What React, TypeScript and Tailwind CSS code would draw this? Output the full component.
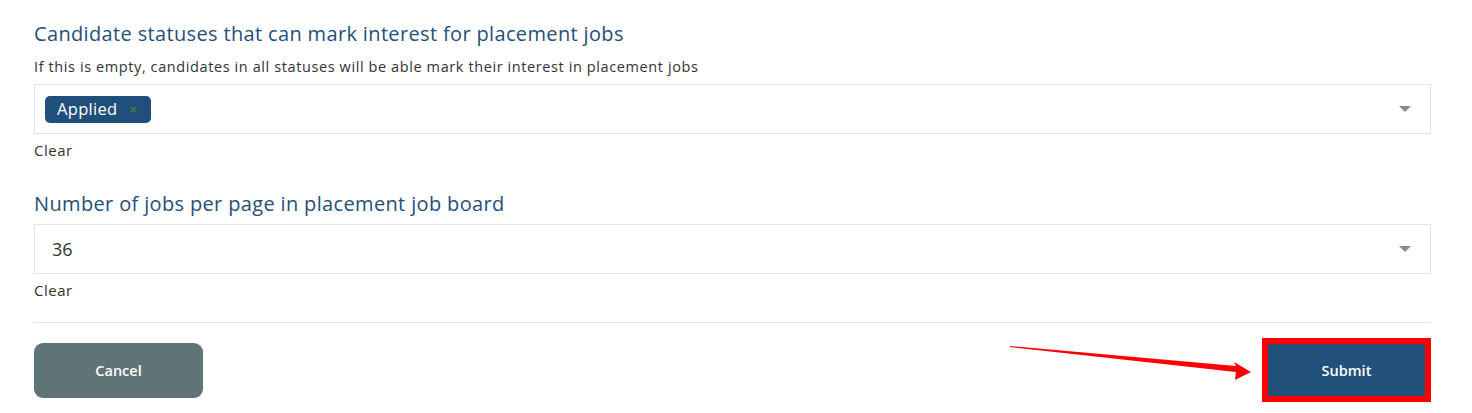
import React from "react";

function Caret() {
  return (
    <svg width="12" height="6" viewBox="0 0 12 6" className="shrink-0">
      <path d="M0 0 L12 0 L6 6 Z" fill="#8a8a8a" />
    </svg>
  );
}

export default function App() {
  return (
    <div
      className="w-[1472px] h-[413px] bg-white relative overflow-hidden"
      style={{ fontFamily: '"Open Sans", "Noto Sans", sans-serif' }}
    >
      <div className="ml-[34px] w-[1397px] pt-[22px]">
        <h2 className="text-[20px] leading-[24px] tracking-[0.35px] text-[#1f4f7a] font-medium">
          Candidate statuses that can mark interest for placement jobs
        </h2>
        <p className="mt-[11px] text-[14.5px] leading-[20px] tracking-[0.6px] text-[#333]">
          If this is empty, candidates in all statuses will be able mark their interest in placement jobs
        </p>
        <div className="mt-[7px] h-[50px] border border-[#e3e3e3] flex items-center pl-[10px] pr-[19px]">
          <div className="h-[27px] w-[106px] rounded-[5px] bg-[#1f4f7a] flex items-center pl-[12px]">
            <span className="text-white text-[16.5px] leading-none tracking-[0.3px]">Applied</span>
            <span className="ml-[12px] text-[#3a8a3e] text-[13px] leading-none font-bold">×</span>
          </div>
          <div className="flex-1" />
          <Caret />
        </div>
        <div className="mt-[6px] text-[15px] leading-[20px] tracking-[0.5px] text-[#333]">Clear</div>

        <h2 className="mt-[32px] text-[20px] leading-[24px] tracking-[0.35px] text-[#1f4f7a] font-medium">
          Number of jobs per page in placement job board
        </h2>
        <div className="mt-[8px] h-[50px] border border-[#e3e3e3] flex items-center pl-[17px] pr-[19px]">
          <span className="text-[18px] text-[#333]">36</span>
          <div className="flex-1" />
          <Caret />
        </div>
        <div className="mt-[6px] text-[15px] leading-[20px] tracking-[0.5px] text-[#333]">Clear</div>

        <div className="mt-[22px] border-t border-[#e3e3e3]" />

        <div className="mt-[20px] flex items-start justify-between">
          <button className="w-[169px] h-[55px] rounded-[9px] bg-[#607477] text-white text-[14.5px] font-semibold">
            Cancel
          </button>
          <div className="-mt-[5px] border-[6px] border-[#ff0000]">
            <button className="w-[157px] h-[52px] pt-[2px] bg-[#21507a] text-white text-[14.5px] font-semibold block">
              Submit
            </button>
          </div>
        </div>
      </div>

      <svg
        className="absolute left-[1005px] top-[340px]"
        width="250"
        height="45"
        viewBox="1005 340 250 45"
      >
        <polygon
          points="1010,346 1236,366 1234,362 1251,372 1235,380 1236,372 1010,347"
          fill="#ff0000"
        />
      </svg>
    </div>
  );
}
